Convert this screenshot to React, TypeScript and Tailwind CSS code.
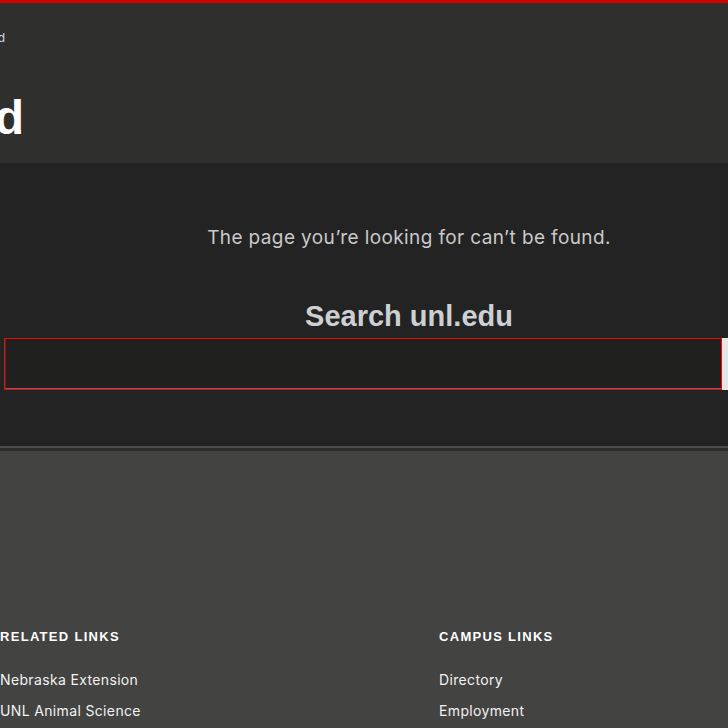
import React from "react";

export default function App() {
  const body = { fontFamily: "Inter, 'Liberation Sans', sans-serif" };
  const head = { fontFamily: "'Liberation Sans', Arial, sans-serif" };
  return (
    <div className="w-[728px] h-[728px] overflow-hidden bg-[#434341]" style={body}>
      <div className="h-[3px] bg-[#d40000]" />
      <header className="h-[160px] bg-[#2f2f2e] flex flex-col">
        <div className="flex justify-end w-[5px] mt-[27px] h-[16px] items-center">
          <span className="whitespace-nowrap text-[12px] text-[#cfd8e2]">Page Not Found</span>
        </div>
        <div className="flex justify-end w-[24px] mt-[44px]">
          <h1 className="whitespace-nowrap text-[48px] leading-[56px] font-bold text-white" style={head}>
            Page Not Found
          </h1>
        </div>
      </header>
      <main className="h-[283px] bg-[#232323] overflow-hidden">
        <div className="ml-[4px] w-[810px] flex flex-col items-center pt-[63px]">
          <p className="text-[19px] leading-[24px] tracking-[0.02em] text-[#c9c9c9]">
            The page you’re looking for can’t be found.
          </p>
          <h2 className="mt-[48px] text-[29px] leading-[36px] font-bold text-[#cdd0d3]" style={head}>
            Search unl.edu
          </h2>
          <div className="mt-[4px] w-full flex h-[52px]">
            <div className="w-[718px] h-full border border-[#ff0000] bg-[#20201f]">
              <div className="h-full border-b border-l border-[#6f6f6f] border-l-[#3a3a3a]" />
            </div>
            <div className="flex-1 h-full bg-[#e6e6e6]" />
          </div>
        </div>
      </main>
      <div className="h-[2px] bg-[#4c4c4c]" />
      <div className="h-[3px] bg-[#2c2c2c]" />
      <footer className="bg-[#434341] pt-[178px] flex">
        <div className="w-[439px] flex flex-col">
          <h3 className="text-[13px] leading-[16px] font-bold tracking-[0.1em] text-white uppercase" style={head}>
            Related Links
          </h3>
          <ul className="mt-[26px] flex flex-col gap-[13px] text-[14px] leading-[18px] tracking-[0.025em] text-[#f2f2f2]">
            <li>Nebraska Extension</li>
            <li>UNL Animal Science</li>
          </ul>
        </div>
        <div className="flex flex-col">
          <h3 className="text-[13px] leading-[16px] font-bold tracking-[0.1em] text-white uppercase" style={head}>
            Campus Links
          </h3>
          <ul className="mt-[26px] flex flex-col gap-[13px] text-[14px] leading-[18px] tracking-[0.025em] text-[#f2f2f2]">
            <li>Directory</li>
            <li>Employment</li>
          </ul>
        </div>
      </footer>
    </div>
  );
}
